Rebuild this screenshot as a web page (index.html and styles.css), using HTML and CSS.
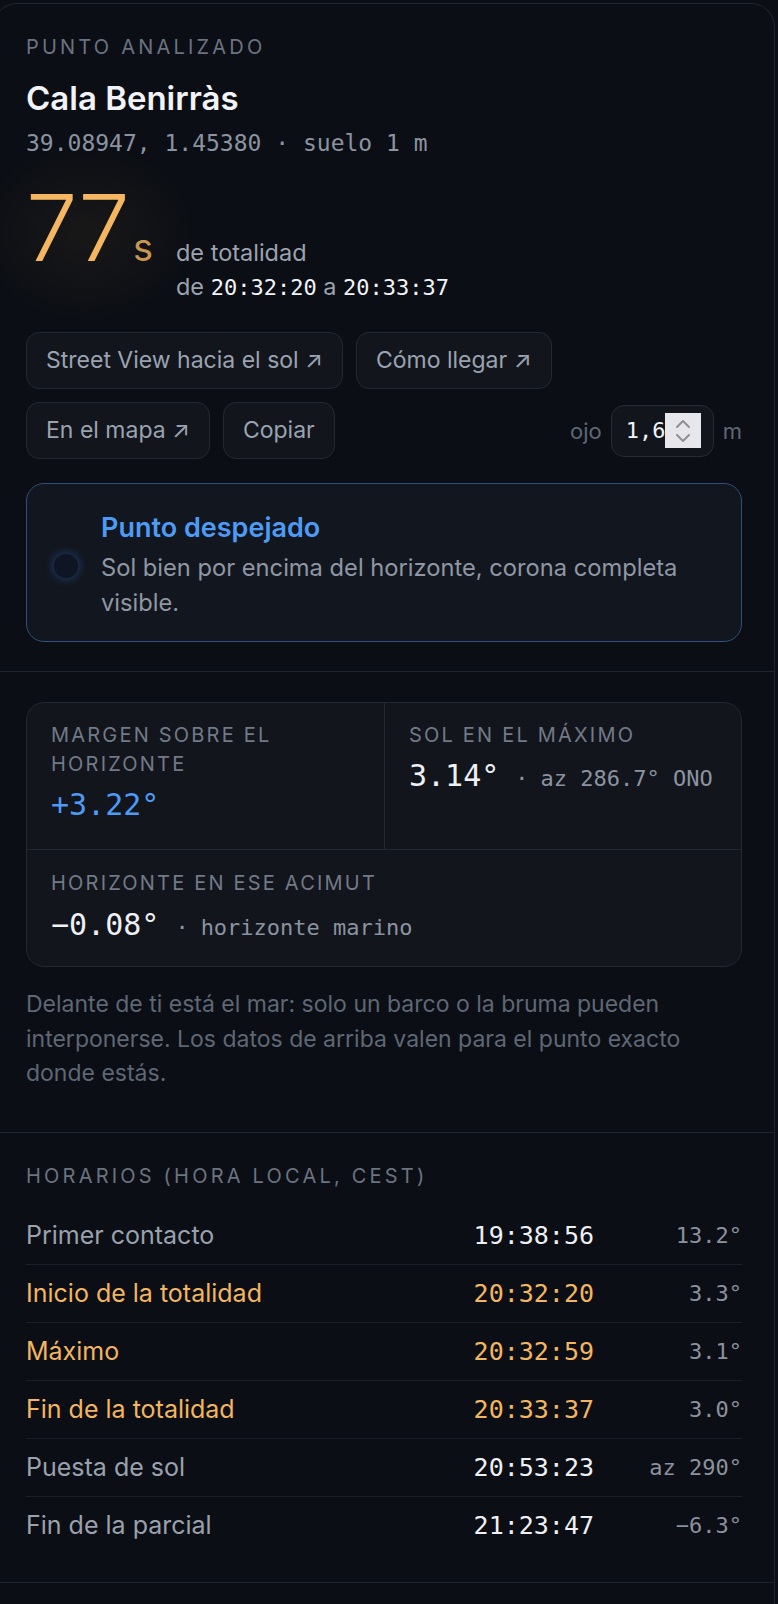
FILE: index.html
```html
<!DOCTYPE html>
<html lang="es">
<head>
    <meta charset="UTF-8">
    <meta name="viewport" content="width=device-width, initial-scale=1.0">
    <title>Punto analizado</title>
    <link rel="stylesheet" href="styles.css">
</head>
<body>
<div class="panel">
    <section class="sec sec-top">
        <div class="label">Punto analizado</div>
        <h1 class="place">Cala Benirràs</h1>
        <div class="coords">39.08947, 1.45380 · suelo 1 m</div>

        <div class="totality">
            <span class="big">77</span>
            <span class="unit">s</span>
            <div class="tot-text">
                <div>de totalidad</div>
                <div>de <span class="time">20:32:20</span> a <span class="time">20:33:37</span></div>
            </div>
        </div>

        <div class="actions">
            <div class="btn-row">
                <a href="#" class="btn">Street View hacia el sol ↗</a>
                <a href="#" class="btn">Cómo llegar ↗</a>
            </div>
            <div class="btn-row">
                <a href="#" class="btn">En el mapa ↗</a>
                <button class="btn" id="copy">Copiar</button>
                <label class="eye">
                    <span>ojo</span>
                    <span class="num">
                        <span class="num-val">1,6</span>
                        <span class="spin">
                            <svg width="18" height="30" viewBox="0 0 18 30" fill="none" stroke="#8e8e96" stroke-width="2" stroke-linecap="round" stroke-linejoin="round">
                                <path d="M3 11 L9 5 L15 11"/>
                                <path d="M3 19 L9 25 L15 19"/>
                            </svg>
                        </span>
                    </span>
                    <span>m</span>
                </label>
            </div>
        </div>

        <div class="status">
            <span class="dot"></span>
            <div>
                <div class="status-title">Punto despejado</div>
                <div class="status-text">Sol bien por encima del horizonte, corona completa visible.</div>
            </div>
        </div>
    </section>

    <section class="sec sec-metrics">
        <div class="metrics">
            <div class="cell">
                <div class="cell-label">Margen sobre el horizonte</div>
                <div class="cell-value blue">+3.22°</div>
            </div>
            <div class="cell cell-right">
                <div class="cell-label">Sol en el máximo</div>
                <div class="cell-value">3.14°<span class="sep">·</span><span class="extra">az 286.7° ONO</span></div>
            </div>
            <div class="cell cell-wide">
                <div class="cell-label">Horizonte en ese acimut</div>
                <div class="cell-value">−0.08°<span class="sep">·</span><span class="extra">horizonte marino</span></div>
            </div>
        </div>
        <p class="note">Delante de ti está el mar: solo un barco o la bruma pueden interponerse. Los datos de arriba valen para el punto exacto donde estás.</p>
    </section>

    <section class="sec sec-times">
        <div class="label">Horarios (hora local, CEST)</div>
        <div class="times">
            <div class="row">
                <span class="row-name">Primer contacto</span>
                <span class="row-time">19:38:56</span>
                <span class="row-deg">13.2°</span>
            </div>
            <div class="row total">
                <span class="row-name">Inicio de la totalidad</span>
                <span class="row-time">20:32:20</span>
                <span class="row-deg">3.3°</span>
            </div>
            <div class="row total">
                <span class="row-name">Máximo</span>
                <span class="row-time">20:32:59</span>
                <span class="row-deg">3.1°</span>
            </div>
            <div class="row total">
                <span class="row-name">Fin de la totalidad</span>
                <span class="row-time">20:33:37</span>
                <span class="row-deg">3.0°</span>
            </div>
            <div class="row">
                <span class="row-name">Puesta de sol</span>
                <span class="row-time">20:53:23</span>
                <span class="row-deg">az 290°</span>
            </div>
            <div class="row">
                <span class="row-name">Fin de la parcial</span>
                <span class="row-time">21:23:47</span>
                <span class="row-deg">−6.3°</span>
            </div>
        </div>
    </section>
    <div class="tail"></div>
</div>
</body>
</html>
```

FILE: styles.css
```css
body {
    margin: 0;
    background: #0b0e14;
    color: #eef0f3;
    font-family: Inter, "Noto Sans", sans-serif;
}

.panel {
    margin: 3px 0 0 -7px;
    width: 782px;
    box-sizing: border-box;
    border: 1px solid #1e2430;
    border-bottom: none;
    border-radius: 24px 24px 0 0;
}
.sec { padding: 30px 32px; border-bottom: 1px solid #1e2430; }
.sec-top { padding-top: 30px; padding-bottom: 29px; }
.tail { height: 40px; }

.label {
    font-size: 20px;
    line-height: 27px;
    letter-spacing: 0.16em;
    text-transform: uppercase;
    color: #6c7380;
}

.place {
    margin: 17px 0 0;
    font-size: 33px;
    line-height: 41px;
    font-weight: 600;
    color: #f1f3f6;
}
.coords {
    margin-top: 9px;
    font-family: "DejaVu Sans Mono", monospace;
    font-size: 23px;
    line-height: 30px;
    color: #8c93a0;
}

/* duration */
.totality {
    display: flex;
    align-items: baseline;
    margin-top: 25px;
}
.big {
    position: relative;
    font-size: 92px;
    line-height: 90px;
    font-weight: 300;
    letter-spacing: -0.01em;
    color: #f4b660;
}
.big::before {
    content: "";
    position: absolute;
    left: -50px;
    top: -40px;
    width: 220px;
    height: 180px;
    background: radial-gradient(closest-side, rgba(245, 182, 96, 0.06), rgba(245, 182, 96, 0));
    pointer-events: none;
}
.unit { margin-left: 4px; font-size: 38px; color: #c8964f; }
.tot-text {
    margin-left: 23px;
    font-size: 23.5px;
    line-height: 34px;
    color: #9ca3af;
}
.time {
    font-family: "DejaVu Sans Mono", monospace;
    font-size: 22px;
    color: #f1f3f6;
}

/* buttons */
.actions { margin-top: 27px; display: flex; flex-direction: column; gap: 13px; }
.btn-row { display: flex; align-items: center; gap: 13px; }
.btn {
    padding: 15px 19px;
    font-family: inherit;
    font-size: 23px;
    line-height: 25px;
    color: #9ba3b0;
    background: #12151c;
    border: 1px solid #232934;
    border-radius: 13px;
    text-decoration: none;
}
.eye {
    margin-left: auto;
    display: flex;
    align-items: center;
    gap: 9px;
    font-size: 22px;
    color: #5f6775;
}
.num {
    display: flex;
    align-items: center;
    width: 103px;
    height: 52px;
    box-sizing: border-box;
    padding: 0 12px 0 14px;
    background: #12151c;
    border: 1px solid #262c37;
    border-radius: 13px;
}
.num-val {
    flex: 1;
    font-family: "DejaVu Sans Mono", monospace;
    font-size: 22px;
    color: #f1f3f6;
}
.spin {
    display: flex;
    align-items: center;
    justify-content: center;
    width: 36px;
    height: 35px;
    background: #e6e6eb;
}

/* status */
.status {
    margin-top: 24px;
    display: flex;
    align-items: center;
    gap: 23px;
    padding: 27px 28px 21px 27px;
    background: #12161e;
    border: 1px solid #2d5080;
    border-radius: 18px;
}
.dot {
    flex: none;
    width: 24px;
    height: 24px;
    border-radius: 50%;
    background: #0f1522;
    box-shadow: 0 0 9px 2px rgba(59, 130, 246, 0.3);
}
.status-title {
    font-size: 27px;
    line-height: 34px;
    font-weight: 600;
    color: #4e9bf6;
    margin-bottom: 5px;
}
.status-text { font-size: 23.7px; line-height: 35px; color: #8f97a4; }

/* metrics */
.metrics {
    display: grid;
    grid-template-columns: 1fr 1fr;
    background: #12151c;
    border: 1px solid #222834;
    border-radius: 18px;
}
.cell { padding: 18px 24px 25px; }
.cell-right { border-left: 1px solid #222834; }
.cell-wide { grid-column: 1 / 3; border-top: 1px solid #222834; padding-top: 19px; padding-bottom: 19px; }
.cell-label {
    font-size: 20px;
    line-height: 29px;
    letter-spacing: 0.11em;
    text-transform: uppercase;
    color: #737a87;
}
.cell-value {
    margin-top: 7px;
    font-family: "DejaVu Sans Mono", monospace;
    font-size: 30px;
    line-height: 38px;
    color: #eef0f3;
}
.cell-wide .cell-value { margin-top: 8px; }
.cell-value.blue { color: #4e9bf6; }
.sep { margin: 0 12px 0 16px; font-size: 22px; color: #8c93a0; }
.extra { font-size: 22px; color: #8c93a0; }

.note {
    margin: 20px 0 11px;
    font-size: 23px;
    line-height: 34.5px;
    color: #5f6774;
}

/* timetable */
.sec-times { padding-bottom: 28px; }
.times { margin-top: 17px; }
.row {
    display: grid;
    grid-template-columns: 1fr auto 148px;
    align-items: center;
    height: 57px;
    border-bottom: 1px solid #1a1f29;
}
.row:last-child { border-bottom: none; }
.row-name { font-size: 25px; color: #9aa1ad; }
.row-time { font-family: "DejaVu Sans Mono", monospace; font-size: 25px; color: #eef0f3; }
.row-deg { font-family: "DejaVu Sans Mono", monospace; font-size: 22px; color: #8b929e; text-align: right; }
.row.total .row-name, .row.total .row-time { color: #f2b560; }
```
